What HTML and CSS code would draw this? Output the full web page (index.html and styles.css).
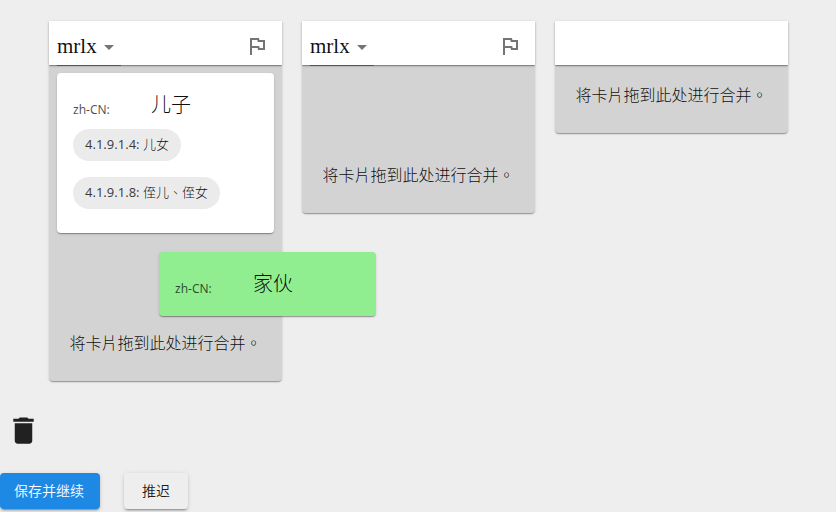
FILE: index.html
```html
<!DOCTYPE html>
<html lang="zh-TW">
<head>
<meta charset="utf-8">
<title>合并</title>
<link rel="stylesheet" href="styles.css">
</head>
<body>
<main class="page">
  <div class="columns">
    <section class="column column-tall">
      <header class="column-header">
        <div class="select"><span class="select-value">mrlx</span><i class="caret"></i></div>
        <svg class="flag" viewBox="0 0 24 24"><path d="M12.36 6l.4 2H18v6h-3.36l-.4-2H7V6h5.36M14 4H5v17h2v-7h5.6l.4 2h7V6h-5.6L14 4z"/></svg>
      </header>
      <article class="card">
        <div class="gloss"><span class="lang">zh-CN:</span><span class="word">儿子</span></div>
        <div class="chip"><span class="chip-code">4.1.9.1.4: </span>儿女</div>
        <div class="chip"><span class="chip-code">4.1.9.1.8: </span>侄儿、侄女</div>
      </article>
      <p class="hint">将卡片拖到此处进行合并。</p>
      <article class="card card-dragged">
        <div class="gloss"><span class="lang">zh-CN:</span><span class="word">家伙</span></div>
      </article>
    </section>
    <section class="column column-medium">
      <header class="column-header">
        <div class="select"><span class="select-value">mrlx</span><i class="caret"></i></div>
        <svg class="flag" viewBox="0 0 24 24"><path d="M12.36 6l.4 2H18v6h-3.36l-.4-2H7V6h5.36M14 4H5v17h2v-7h5.6l.4 2h7V6h-5.6L14 4z"/></svg>
      </header>
      <p class="hint">将卡片拖到此处进行合并。</p>
    </section>
    <section class="column column-short">
      <header class="column-header"></header>
      <p class="hint">将卡片拖到此处进行合并。</p>
    </section>
  </div>
  <svg class="trash" viewBox="0 0 24 24"><path d="M6 19c0 1.100.9 2 2 2h8c1.100 0 2-.9 2-2V7H6v12zM19 4h-3.500l-1-1h-5l-1 1H5v2h14V4z"/></svg>
  <div class="actions">
    <button class="button button-primary">保存并继续</button>
    <button class="button">推迟</button>
  </div>
</main>
</body>
</html>
```
FILE: styles.css
```css
* { box-sizing: border-box; }

body {
  margin: 0;
  height: 512px;
  overflow: hidden;
  background: #eee;
  color: rgba(0, 0, 0, 0.95);
  font-family: "Noto Sans", "Noto Sans CJK TC", sans-serif;
  font-weight: 300;
}

.page {
  height: 512px;
  padding-top: 21px;
}

.columns {
  display: flex;
  align-items: flex-start;
  gap: 20px;
  height: 392px;
  padding-left: 49px;
}

.column {
  position: relative;
  display: flex;
  flex-direction: column;
  width: 233px;
  background: #d3d3d3;
  border-radius: 0 0 4px 4px;
  box-shadow: 0 2px 1px -1px rgba(0, 0, 0, 0.2), 0 1px 1px rgba(0, 0, 0, 0.14), 0 1px 3px rgba(0, 0, 0, 0.12);
}

.column-tall { height: 360px; }
.column-medium { height: 192px; }
.column-short { height: 112px; }

.column-header {
  display: flex;
  justify-content: space-between;
  height: 44px;
  padding: 0 13px 0 8px;
  background: #fff;
  box-shadow: 0 2px 1px -1px rgba(0, 0, 0, 0.2), 0 1px 1px rgba(0, 0, 0, 0.14), 0 1px 3px rgba(0, 0, 0, 0.12);
}

.select {
  display: flex;
  align-items: center;
  width: 64px;
  height: 45px;
  padding-top: 6px;
  border-bottom: 1px solid #555;
}

.select-value {
  width: 47px;
  font: 400 21px/24px "Liberation Serif", serif;
}

.caret {
  border: 5px solid transparent;
  border-top-color: #757575;
  border-bottom: 0;
  margin-top: 2px;
}

.flag {
  width: 24px;
  height: 24px;
  margin-top: 13px;
  fill: #757575;
}

.card {
  height: 160px;
  width: 217px;
  margin: 8px 8px 0;
  padding: 16px;
  background: #fff;
  border-radius: 4px;
  box-shadow: 0 2px 1px -1px rgba(0, 0, 0, 0.2), 0 1px 1px rgba(0, 0, 0, 0.14), 0 1px 3px rgba(0, 0, 0, 0.12);
}

.card-dragged {
  position: absolute;
  left: 110px;
  top: 231px;
  z-index: 2;
  height: 64px;
  margin: 0;
  background: #90ee90;
}

.gloss {
  display: flex;
  height: 32px;
  line-height: 32px;
}

.lang {
  width: 78px;
  padding-top: 5px;
  font-size: 12px;
  font-weight: 400;
  color: rgba(0, 0, 0, 0.7);
}

.word {
  font-size: 20px;
  line-height: 31px;
}

.chip {
  width: fit-content;
  height: 32px;
  margin: 8px 0 16px;
  padding: 0 12px;
  border-radius: 16px;
  background: #ebebeb;
  font-size: 13px;
  line-height: 30px;
}

.chip-code {
  font-weight: 400;
  color: rgba(0, 0, 0, 0.75);
}

.hint {
  margin: auto 0 24px;
  font-size: 16px;
  line-height: 28px;
  text-align: center;
  white-space: nowrap;
}

.trash {
  display: block;
  width: 35px;
  height: 35px;
  margin-left: 6px;
  fill: #212121;
}

.actions {
  display: flex;
  gap: 24px;
  margin-top: 25px;
}

.button {
  width: 64px;
  height: 36px;
  padding: 0;
  border: 0;
  border-radius: 4px;
  background: #eee;
  color: rgba(0, 0, 0, 0.9);
  font: 350 14px/36px "Noto Sans", "Noto Sans CJK TC", sans-serif;
  box-shadow: 0 3px 1px -2px rgba(0, 0, 0, 0.2), 0 2px 2px rgba(0, 0, 0, 0.14), 0 1px 5px rgba(0, 0, 0, 0.12);
}

.button-primary {
  width: 100px;
  padding-right: 2px;
  background: #1e88e5;
  color: #fff;
}
```
